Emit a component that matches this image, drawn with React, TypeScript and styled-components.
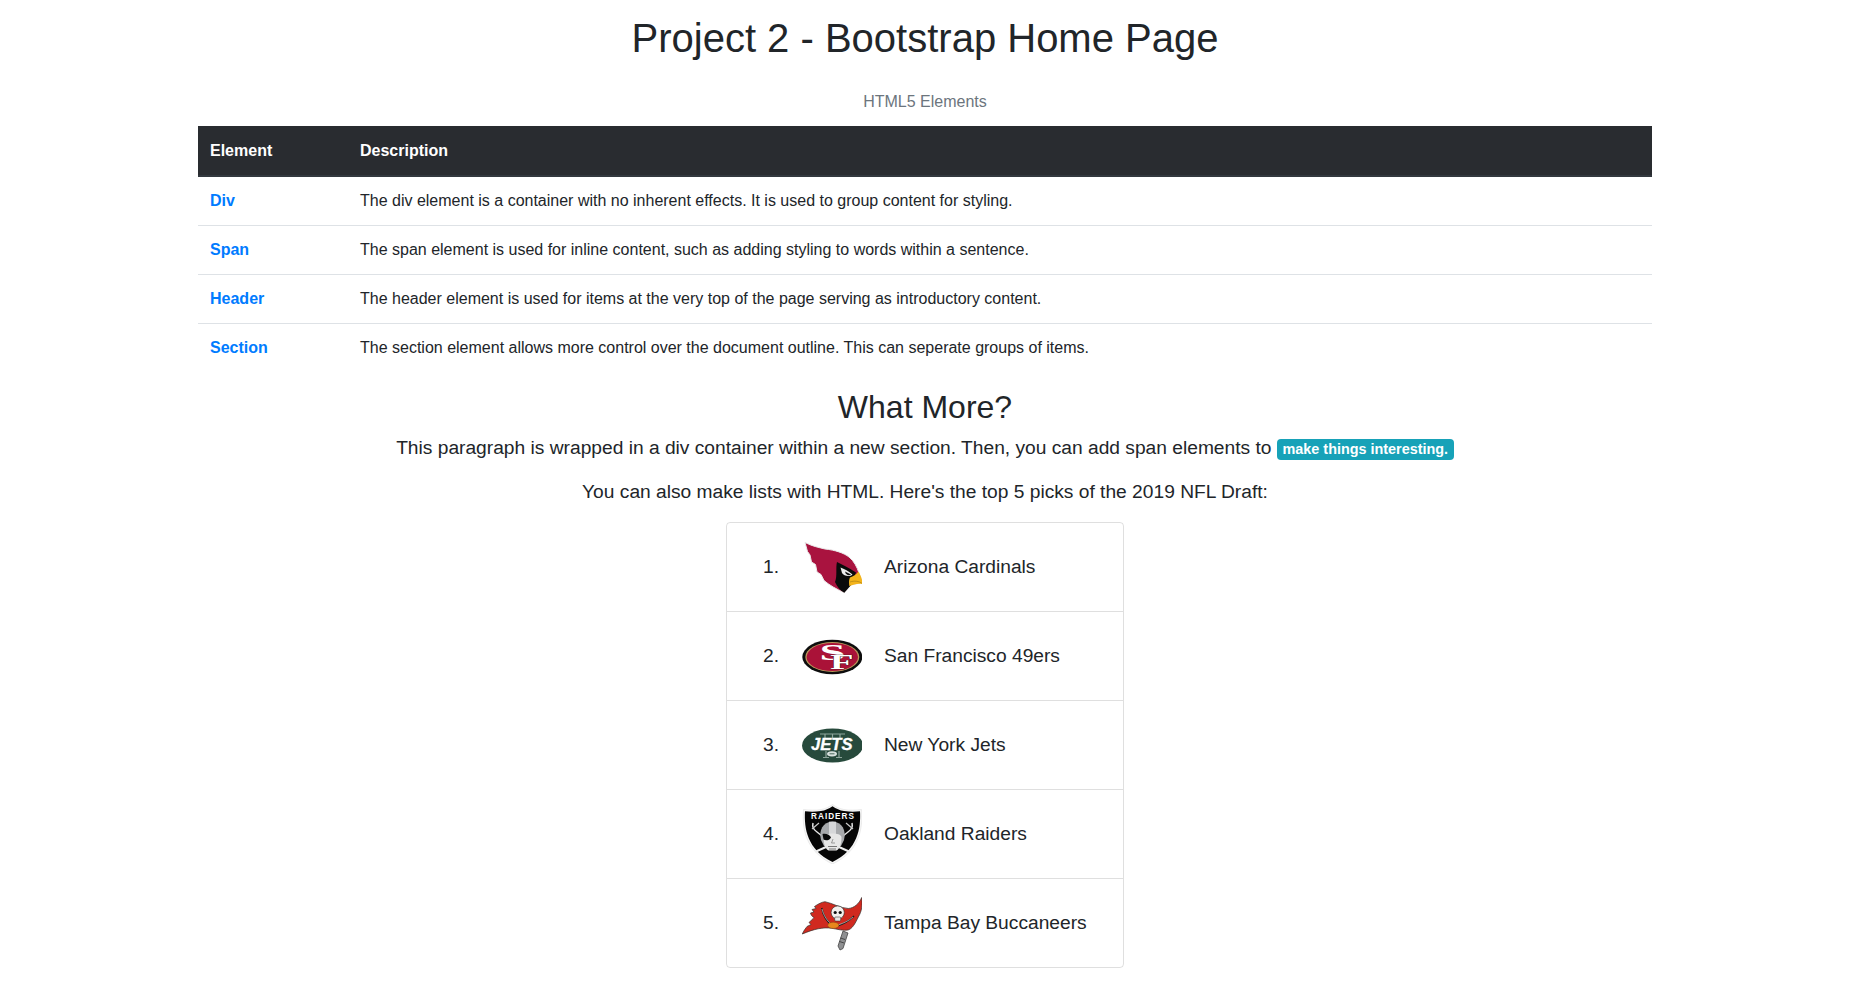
import styled, { createGlobalStyle } from 'styled-components';

const GlobalStyle = createGlobalStyle`
  * {
    box-sizing: border-box;
  }
  body {
    margin: 0;
    background: #fff;
    color: #212529;
    font-family: 'Liberation Sans', Arial, sans-serif;
    font-size: 16px;
    line-height: 1.5;
  }
`;

const elements = [
  { name: 'Div', text: 'The div element is a container with no inherent effects. It is used to group content for styling.' },
  { name: 'Span', text: 'The span element is used for inline content, such as adding styling to words within a sentence.' },
  { name: 'Header', text: 'The header element is used for items at the very top of the page serving as introductory content.' },
  { name: 'Section', text: 'The section element allows more control over the document outline. This can seperate groups of items.' },
];

const Cardinal = () => (
  <svg width="60" height="60" viewBox="0 0 60 60">
    <path d="M3 5.5 C11 9.5 17 10.5 23 12 C33 13 42 16 47 20 C52 24 55 30 56.8 35.5 L60.3 45.7 L48.5 48 L42.3 55.7 C35 52.5 27 48 22 43.5 L19 37.5 L15 35 L13.5 27.5 L9.5 25 L8 18 L5.5 14.5 Z" fill="#a9133f" stroke="#eaeaea" strokeWidth="1" strokeLinejoin="round" />
    <path d="M35 25 C40 27.5 46 30.5 54 35.5 L50 47 L42.3 55.7 C38 53.5 35 49.5 33 45 C35.5 39 33.5 31 35 25 Z" fill="#0a0a0a" />
    <path d="M38.5 30.5 C42 32 47 34 50.5 37.5 C48 40 42 39.5 40 36 Z" fill="#ececec" />
    <path d="M43 34.5 L49 37.5 C47 38.8 44 38.3 43 34.5 Z" fill="#111" />
    <path d="M56.5 34.5 C58.5 38 60.3 42 60.6 47 C56 46 52 47.2 47.3 49 C46.8 45.5 47 42.5 48 40.5 C51 39.5 54.5 37.5 56.5 34.5 Z" fill="#f4b41a" />
    <path d="M48 45 C52 43.5 57 44 60.3 46.5" fill="none" stroke="#8c6a12" strokeWidth="0.5" />
  </svg>
);

const Niners = () => (
  <svg width="60" height="60" viewBox="0 0 60 60">
    <ellipse cx="30.3" cy="31" rx="30" ry="17.2" fill="#0d0d0d" />
    <ellipse cx="30.3" cy="31" rx="27" ry="15" fill="#b9975b" />
    <ellipse cx="30.3" cy="31" rx="25.7" ry="14" fill="#aa1238" />
    <LogoText x="17.5" y="33.5" fontSize="24" textLength="26" lengthAdjust="spacingAndGlyphs" fill="#fff" fontFamily="'Liberation Serif', serif" fontWeight="700">S</LogoText>
    <LogoText x="28" y="43" fontSize="20" textLength="23.5" lengthAdjust="spacingAndGlyphs" fill="#fff" fontFamily="'Liberation Serif', serif" fontWeight="700" stroke="#3a1a20" strokeWidth="0.7" paintOrder="stroke">F</LogoText>
  </svg>
);

const Jets = () => (
  <svg width="60" height="60" viewBox="0 0 60 60">
    <ellipse cx="30.5" cy="30.5" rx="30.5" ry="17" fill="#274a3c" />
    <path d="M18 19 H43 M23 19 V24 M30.5 19 V24 M38 19 V24 M24 36 V42.5 M37 36 V42.5 M21 42.5 H27 M34 42.5 H40" stroke="#8ea59b" strokeWidth="1.2" fill="none" />
    <LogoText x="9" y="35" fontSize="16" textLength="41.5" lengthAdjust="spacingAndGlyphs" fill="#fff" fontFamily="'Liberation Sans', sans-serif" fontWeight="700" fontStyle="italic" stroke="#fff" strokeWidth="0.3">JETS</LogoText>
    <ellipse cx="30" cy="38.8" rx="5" ry="2.6" fill="#d9e2de" />
    <path d="M27.5 38.8 H32.5" stroke="#274a3c" strokeWidth="0.8" />
  </svg>
);

const Raiders = () => (
  <svg width="60" height="60" viewBox="0 0 60 60">
    <path d="M30.5 0.5 C34 3 38 5 42 5.5 C48 6.5 54 6 59.5 5.5 C61 24 58 47 30.5 60 C3 47 0 24 1.5 5.5 C7 6 13 6.5 19 5.5 C23 5 27 3 30.5 0.5 Z" fill="#f6f6f6" stroke="#ddd" strokeWidth="0.5" />
    <path d="M30.5 2.2 C34 4.5 38 6.5 42 7 C48 7.8 53 7.8 58 7.2 C59 24 56 45.5 30.5 58 C5 45.5 2 24 3 7.2 C8 7.8 13 7.8 19 7 C23 6.5 27 4.5 30.5 2.2 Z" fill="#050505" />
    <LogoText x="9" y="15.3" fontSize="8.2" textLength="43" lengthAdjust="spacing" fill="#fff" fontFamily="'Liberation Sans', sans-serif" fontWeight="700">RAIDERS</LogoText>
    <path d="M11 19 C10 23 12 26 15 28 L25 36 M50 19 C51 23 49 26 46 28 L36 36" stroke="#e4e4e4" strokeWidth="1.5" fill="none" />
    <path d="M10 25 L17 19 M51 25 L44 19" stroke="#c8c8c8" strokeWidth="1.2" />
    <path d="M14 47.5 L24 43 M47 47.5 L37 43" stroke="#ededed" strokeWidth="2" strokeLinecap="round" />
    <path d="M19 36 C16.5 26 21 18 30.5 17.5 C40 18 44.5 26 42 36 L39 42 H22 Z" fill="#a7a9ac" />
    <path d="M27 17.7 H34 V30 H27 Z" fill="#d6d7d9" />
    <path d="M21.5 33 C22 30.5 27 29.5 30.5 29.5 C35 29.5 39 30.5 39.5 33 C39.5 40 38 44.5 34.5 46.5 H26.5 C23 44.5 21.5 40 21.5 33 Z" fill="#e6e6e6" />
    <path d="M20.5 30 C24 29 28 31 29 33.5 C27.5 36.5 23.5 37 21.5 35.5 Z" fill="#080808" />
    <path d="M26 42.5 H35 M27 45 H34" stroke="#6a6a6a" strokeWidth="0.9" />
    <path d="M31 35 L29.5 39 H33" stroke="#777" strokeWidth="0.7" fill="none" />
  </svg>
);

const Buccaneers = () => (
  <svg width="60" height="60" viewBox="0 0 60 60">
    <path d="M41 38 L36 53 L38 57 L41 55.5 L46 40 Z" fill="#8f9092" stroke="#444" strokeWidth="0.8" />
    <path d="M38.5 45 L43 46.5 M37.5 48.5 L42 50" stroke="#333" strokeWidth="0.8" />
    <path d="M59.7 4.5 C60.5 12 60 18 56.3 24 C53 31 50 36 46 37 C41 38 35 36 29.7 35.3 C21 34 12 36 0.3 41 C2 37 4 35 5 33.5 L9 31.5 L7 29.5 C9 27.5 11 26 12 24.5 C10 23.5 9 22 8.5 20 L12 19 L10 16.5 L14 15.5 L12.5 13.5 C16 11 20 9 23 8.7 C30 10 38 15 46.3 15.5 C52 15 57 11 59.7 4.5 Z" fill="#d0291f" stroke="#33302e" strokeWidth="0.7" strokeLinejoin="round" />
    <path d="M19.7 15 C21 22 25 29 31 33 M52 23 C47 28 42 31 35 33" fill="none" stroke="#1c1c1c" strokeWidth="1.5" />
    <path d="M20 16 C21.5 22 25 28.5 30.5 32 M51 24 C46.5 28 42 30 36 32" fill="none" stroke="#e8e8e8" strokeWidth="0.6" />
    <circle cx="35.7" cy="19.5" r="6.6" fill="#f3f1ee" stroke="#222" strokeWidth="0.6" />
    <rect x="32.7" y="24" width="6" height="4" rx="1" fill="#e8e6e3" stroke="#222" strokeWidth="0.5" />
    <circle cx="33.2" cy="19.5" r="1.6" fill="#111" />
    <circle cx="38.2" cy="19.5" r="1.6" fill="#111" />
    <ellipse cx="31.3" cy="32.3" rx="5.6" ry="3.1" fill="#e8861c" stroke="#6b3b0d" strokeWidth="0.4" />
  </svg>
);

const picks = [
  { team: 'Arizona Cardinals', Logo: Cardinal },
  { team: 'San Francisco 49ers', Logo: Niners },
  { team: 'New York Jets', Logo: Jets },
  { team: 'Oakland Raiders', Logo: Raiders },
  { team: 'Tampa Bay Buccaneers', Logo: Buccaneers },
];

export default function App() {
  return (
    <Page>
      <GlobalStyle />
      <Title>Project 2 - Bootstrap Home Page</Title>
      <ElementTable>
        <Caption>HTML5 Elements</Caption>
        <thead>
          <tr>
            <HeadCell $width={150}>Element</HeadCell>
            <HeadCell>Description</HeadCell>
          </tr>
        </thead>
        <tbody>
          {elements.map((el) => (
            <tr key={el.name}>
              <NameCell>
                <NameLink href="#">{el.name}</NameLink>
              </NameCell>
              <BodyCell>{el.text}</BodyCell>
            </tr>
          ))}
        </tbody>
      </ElementTable>
      <MoreSection>
        <SectionTitle>What More?</SectionTitle>
        <Lead>
          This paragraph is wrapped in a div container within a new section.
          Then, you can add span elements to{' '}
          <Badge>make things interesting.</Badge>
        </Lead>
        <Lead>
          You can also make lists with HTML. Here's the top 5 picks of the 2019
          NFL Draft:
        </Lead>
        <PickList>
          {picks.map(({ team, Logo }, i) => (
            <PickRow key={team}>
              <PickNumber>{i + 1}.</PickNumber>
              <LogoBox>
                <Logo />
              </LogoBox>
              <TeamName>{team}</TeamName>
            </PickRow>
          ))}
        </PickList>
      </MoreSection>
    </Page>
  );
}

const Page = styled.div`
  width: 1454px;
  margin-left: 198px;
  padding-top: 14px;
`;

const Title = styled.h1`
  margin: 0 0 16px;
  font-size: 40px;
  font-weight: 500;
  line-height: 1.2;
  text-align: center;
`;

const ElementTable = styled.table`
  width: 100%;
  border-collapse: collapse;
  caption-side: top;
`;

const Caption = styled.caption`
  padding: 12px;
  color: #6c757d;
  text-align: center;
`;

const HeadCell = styled.th<{ $width?: number }>`
  width: ${({ $width }) => ($width ? `${$width}px` : 'auto')};
  padding: 13px 12px 12px;
  background: #292c30;
  border-bottom: 2px solid #32383e;
  color: #fff;
  font-weight: 700;
  text-align: left;
`;

const BodyCell = styled.td`
  padding: 12px;
  border-top: 1px solid #dee2e6;
`;

const NameCell = styled(BodyCell)`
  font-weight: 700;
`;

const NameLink = styled.a`
  color: #007bff;
  text-decoration: none;
`;

const MoreSection = styled.section`
  margin-top: 16px;
  text-align: center;
`;

const SectionTitle = styled.h2`
  margin: 0 0 8px;
  font-size: 32px;
  font-weight: 500;
  line-height: 1.2;
`;

const Lead = styled.p`
  margin: 0 0 16px;
  font-size: 19.2px;
  line-height: 28px;
`;

const Badge = styled.span`
  display: inline-block;
  padding: 0.25em 0.4em;
  border-radius: 4px;
  background: #17a2b8;
  color: #fff;
  font-size: 75%;
  font-weight: 700;
  line-height: 1;
  vertical-align: baseline;
`;

const PickList = styled.ul`
  width: 398px;
  margin: 0 auto;
  padding: 0;
  border: 1px solid rgba(0, 0, 0, 0.125);
  border-radius: 4px;
  list-style: none;
`;

const PickRow = styled.li`
  display: flex;
  align-items: center;
  height: 89px;
  padding-left: 36px;
  border-bottom: 1px solid rgba(0, 0, 0, 0.125);
  font-size: 19.2px;
  text-align: left;

  &:last-child {
    height: 88px;
    border-bottom: 0;
  }
`;

const PickNumber = styled.span`
  width: 39px;
`;

const LogoBox = styled.span`
  display: flex;
  margin-right: 22px;
`;

const TeamName = styled.span`
  white-space: nowrap;
`;

const LogoText = styled.text`
  user-select: none;
`;
